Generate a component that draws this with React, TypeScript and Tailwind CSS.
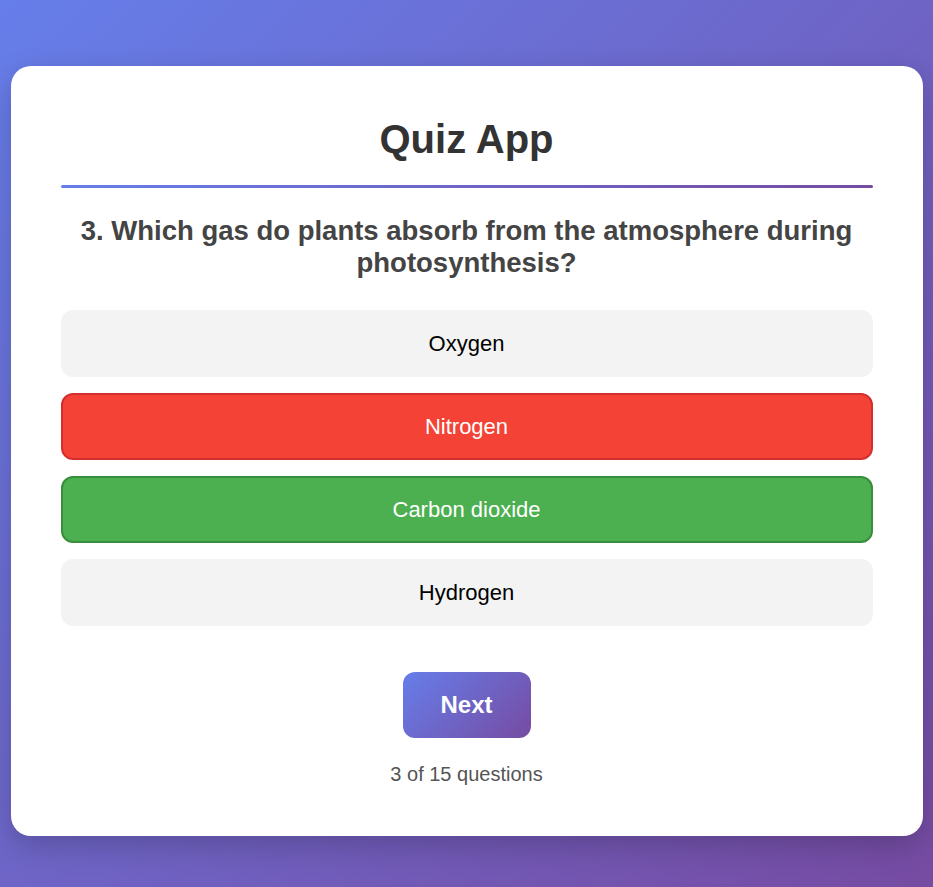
import React, { useState } from "react";

const options = [
  { label: "Oxygen", state: "idle" },
  { label: "Nitrogen", state: "wrong" },
  { label: "Carbon dioxide", state: "correct" },
  { label: "Hydrogen", state: "idle" },
];

const optionClass = {
  idle: "bg-[#f3f3f3] border-[#f3f3f3] text-black",
  wrong: "bg-[#f44336] border-[#d32f2f] text-white",
  correct: "bg-[#4caf50] border-[#388e3c] text-white",
};

const App = (): JSX.Element => {
  const [current] = useState(3);

  return (
    <div
      className="min-h-[887px] w-full bg-[linear-gradient(135deg,#667eea_0%,#764ba2_100%)] pt-[66px] pb-[52px]"
      style={{ fontFamily: '"Liberation Sans", Arial, sans-serif' }}
    >
      <div className="mx-auto w-[912px] rounded-[20px] bg-white px-[50px] pt-[50px] pb-[51px] shadow-[0_10px_30px_rgba(0,0,0,0.2)]">
        <h1 className="text-center text-[40px] font-bold leading-[46px] text-[#333]">
          Quiz App
        </h1>
        <div className="mt-[23px] h-[3px] rounded-full bg-[linear-gradient(90deg,#667eea,#764ba2)]" />

        <h2 className="mt-[27px] text-center text-[27.5px] font-bold leading-[32px] text-[#444]">
          {current}. Which gas do plants absorb from the atmosphere during
          photosynthesis?
        </h2>

        <div className="mt-[31px] flex flex-col gap-[16px]">
          {options.map((opt) => (
            <button
              key={opt.label}
              className={`h-[67px] w-full rounded-[12px] border-2 text-[22px] ${optionClass[opt.state]}`}
            >
              {opt.label}
            </button>
          ))}
        </div>

        <div className="mt-[46px] flex justify-center">
          <button className="h-[66px] w-[128px] rounded-[12px] bg-[linear-gradient(135deg,#667eea_0%,#764ba2_100%)] text-[24px] font-bold text-white">
            Next
          </button>
        </div>

        <p className="mt-[26px] text-center text-[20px] leading-[21px] text-[#555]">
          {current} of 15 questions
        </p>
      </div>
    </div>
  );
};

export default App;
